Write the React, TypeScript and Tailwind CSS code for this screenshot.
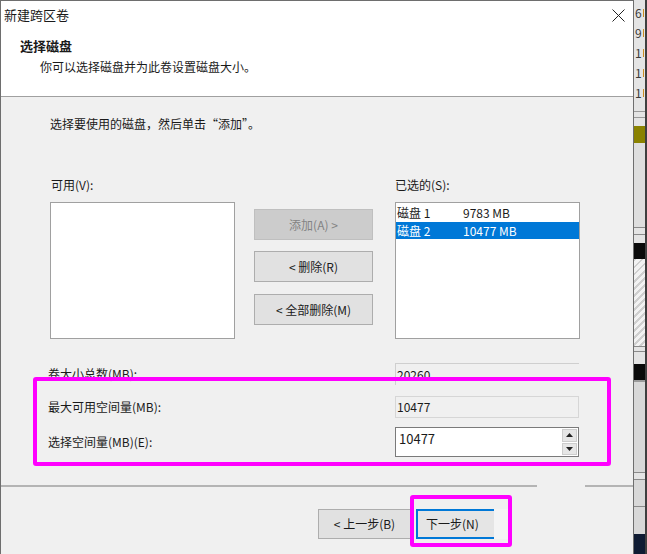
import React from 'react';

const font = { fontFamily: '"Microsoft YaHei", "Noto Sans CJK SC", "Noto Sans", sans-serif' };

const disks = [
  { name: '磁盘 1', size: '9783 MB', selected: false },
  { name: '磁盘 2', size: '10477 MB', selected: true },
];

const peekDigits = ['6', '9', '1', '1', '1'];

const SideStrip: React.FC = () => (
  <div className="flex h-full w-[13px] flex-none">
    <div className="flex w-[11px] flex-col overflow-hidden bg-[#e4e4e4] text-[12px] leading-[20px] text-[#3a3a3a]">
      {/* Background window peeking out at the right edge */}
      <div className="pt-[3px]">
        {peekDigits.map((d, i) => (
          <div key={i} className="flex h-[20px] items-center pl-[1px]">
            <span>{d}</span>
            <span className="ml-[1px] h-[8px] w-[1px] bg-[#c98a1f]" />
          </div>
        ))}
      </div>
      <div className="mt-[8px] h-[1px] bg-[#9a9a9a]" />
      <div className="mt-[5px] h-[1px] bg-[#9a9a9a]" />
      <div className="mt-[8px] h-[17px] bg-[#8a8200]" />
      <div className="h-[84px] bg-[#dedede]" />
      <div className="h-[1px] bg-[#8a8a8a]" />
      <div className="mt-[6px] h-[1px] bg-[#8a8a8a]" />
      <div className="mt-[8px] h-[16px] bg-[#0a0a0a]" />
      <div
        className="h-[87px]"
        style={{ backgroundImage: 'repeating-linear-gradient(135deg, #cfcfcf 0 2px, #f2f2f2 2px 5px)' }}
      />
      <div className="h-[1px] bg-[#8a8a8a]" />
      <div className="mt-[4px] h-[1px] bg-[#8a8a8a]" />
      <div className="mt-[12px] h-[16px] bg-[#0a0a0a]" />
      <div className="h-[2px] bg-[#9a9a9a]" />
      <div className="h-[90px] bg-[#d8d8d8]" />
      <div className="h-[1px] bg-[#8a8a8a]" />
      <div className="mt-[6px] h-[1px] bg-[#8a8a8a]" />
      <div className="h-[26px] bg-[#d8d8d8]" />
      <div className="h-[1px] bg-[#8a8a8a]" />
      <div className="h-[27px] bg-[#d8d8d8]" />
      <div className="flex-1 bg-[#0f1b33]" />
    </div>
    <div className="w-[2px] bg-[#3f3f3f]" />
  </div>
);

const Button: React.FC<{ label: string; disabled?: boolean }> = ({ label, disabled }) => (
  <div
    className={
      disabled
        ? 'flex h-[31px] w-[119px] items-center justify-center border border-[#bfbfbf] bg-[#cccccc] text-[#838383]'
        : 'flex h-[31px] w-[119px] items-center justify-center border border-[#adadad] bg-[#e1e1e1] text-[#1a1a1a]'
    }
  >
    {label}
  </div>
);

const App: React.FC = () => {
  return (
    <div className="flex h-[554px] w-[647px] overflow-hidden bg-[#f0f0f0] text-[12px] leading-[16px] text-[#1a1a1a]" style={font}>
      <div className="relative flex h-full w-[634px] flex-none flex-col border-t border-l border-r border-[#6e6e6e]">
        {/* Header */}
        <div className="h-[96px] flex-none border-b border-[#a0a0a0] bg-white">
          <div className="flex items-start justify-between">
            <div className="pt-[6px] pl-[3px] text-[13px]">新建跨区卷</div>
            <svg className="mt-[8px] mr-[8px]" width="13" height="13" viewBox="0 0 13 13">
              <path d="M0.5 0.5 L12.5 12.5 M12.5 0.5 L0.5 12.5" stroke="#222" strokeWidth="1" fill="none" />
            </svg>
          </div>
          <div className="mt-[15px] pl-[19px] text-[13px] font-bold">选择磁盘</div>
          <div className="mt-[5px] pl-[39px]">你可以选择磁盘并为此卷设置磁盘大小。</div>
        </div>

        {/* Body */}
        <div className="flex flex-1 flex-col bg-[#f0f0f0]">
          <div className="pt-[19px] pl-[49px]">选择要使用的磁盘，然后单击“添加”。</div>

          <div className="mt-[45px] flex pl-[49px]">
            <div className="flex flex-col">
              <div className="pl-[1px]">可用(V):</div>
              <div className="mt-[9px] h-[137px] w-[185px] border border-[#a0a0a0] bg-white" />
            </div>
            <div className="ml-[19px] flex flex-col gap-[11px] pt-[32px]">
              <Button label="添加(A) >" disabled />
              <div className="flex flex-col gap-[12px]">
                <Button label="< 删除(R)" />
                <Button label="< 全部删除(M)" />
              </div>
            </div>
            <div className="ml-[22px] flex flex-col">
              <div>已选的(S):</div>
              <div className="mt-[9px] h-[137px] w-[185px] border border-[#a0a0a0] bg-white pt-[1px]">
                {disks.map((d) => (
                  <div
                    key={d.name}
                    className={
                      d.selected
                        ? 'flex h-[17px] items-center bg-[#0078d7] text-white'
                        : 'flex h-[18px] items-center text-[#1a1a1a]'
                    }
                  >
                    <span className="w-[67px] pl-[1px]">{d.name}</span>
                    <span>{d.size}</span>
                  </div>
                ))}
              </div>
            </div>
          </div>

          {/* Size fields */}
          <div className="mt-[24px] flex flex-col gap-[11px] pl-[47px]">
            <div className="flex items-center">
              <span className="w-[347px]">卷大小总数(MB):</span>
              <div className="flex h-[22px] w-[184px] items-center border-t border-l border-[#cfcfcf] pl-[1px]">20260</div>
            </div>
            <div className="flex items-center">
              <span className="w-[347px]">最大可用空间量(MB):</span>
              <div className="flex h-[22px] w-[184px] items-center border border-[#d6d6d6] pl-[1px]">10477</div>
            </div>
          </div>
          <div className="mt-[9px] flex items-center pl-[47px]">
            <span className="w-[347px]">选择空间量(MB)(E):</span>
            <div className="flex h-[30px] w-[184px] border border-[#7a7a7a] bg-white">
              <div className="flex-1 pt-[3px] pl-[3px] text-[13px]">10477</div>
              <div className="flex w-[17px] flex-col gap-[1px] p-[1px]">
                <div className="flex flex-1 items-center justify-center border border-[#cdcdcd] bg-[#e6e6e6]">
                  <svg width="7" height="4" viewBox="0 0 7 4"><path d="M3.5 0 L7 4 L0 4 Z" fill="#222" /></svg>
                </div>
                <div className="flex flex-1 items-center justify-center border border-[#cdcdcd] bg-[#e6e6e6]">
                  <svg width="7" height="4" viewBox="0 0 7 4"><path d="M0 0 L7 0 L3.5 4 Z" fill="#222" /></svg>
                </div>
              </div>
            </div>
          </div>

          {/* Footer */}
          <div className="mt-[28px] flex h-[2px]">
            <div className="w-[536px] bg-[#b4b4b4]" />
            <div className="w-[48px]" />
            <div className="flex-1 bg-[#b4b4b4]" />
          </div>
          <div className="mt-[22px] flex pl-[317px]">
            <div className="flex h-[30px] w-[93px] items-center justify-center border border-[#adadad] bg-[#e1e1e1]">&lt; 上一步(B)</div>
            <div className="ml-[5px] flex h-[30px] w-[78px] items-center border-y-2 border-l-2 border-[#0078d7] bg-[#e5e5e5] pl-[8px]">
              下一步(N)
            </div>
            <div className="h-[30px] w-[16px] bg-[#f4f4f4]" />
          </div>
        </div>

        {/* Annotation boxes */}
        <div className="absolute top-[376px] left-[32px] h-[89px] w-[578px] rounded-[3px] border-[4px] border-[#ff00ff]" />
        <div className="absolute top-[494px] left-[409px] h-[52px] w-[102px] rounded-[3px] border-[4px] border-[#ff00ff]" />
      </div>
      <SideStrip />
    </div>
  );
};

export default App;
